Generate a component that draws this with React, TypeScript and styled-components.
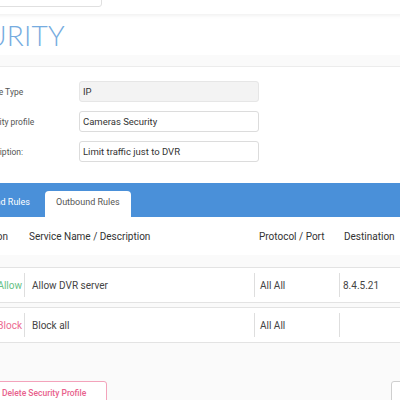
import React from 'react';
import styled, { createGlobalStyle } from 'styled-components';

const GlobalStyle = createGlobalStyle`
  html, body {
    margin: 0;
    padding: 0;
    background: #fafafa;
    overflow: hidden;
    font-family: Roboto, 'Liberation Sans', Arial, sans-serif;
  }
`;

const COLUMNS = '84px 230px 85px 1fr';

const Page = styled.div`
  width: 520px;
  margin-left: -60px;
  display: flex;
  flex-direction: column;
`;

const TopBar = styled.div`
  position: relative;
  z-index: 1;
  height: 14px;
  background: #fff;
  display: flex;
  align-items: flex-end;
  box-shadow: 0 1px 4px rgba(0, 0, 0, 0.08);
  overflow: hidden;
`;

const SearchBox = styled.div`
  width: 150px;
  height: 24px;
  margin: 0 0 7px 12px;
  box-sizing: border-box;
  border: 1px solid #e0e0e0;
  border-radius: 3px;
  font-size: 9px;
  color: #999;
  padding: 2px 6px;
`;

const TitleBar = styled.div`
  height: 41px;
  background: #fff;
  display: flex;
  align-items: center;
  overflow: hidden;
`;

const Title = styled.h1`
  margin: 0 0 0 -4px;
  font-family: Lato, Roboto, 'Liberation Sans', sans-serif;
  font-size: 28px;
  font-weight: 300;
  color: #76ace0;
  letter-spacing: 0.2px;
`;

const Card = styled.div`
  margin-top: 11px;
  background: #fff;
  border-top: 1px solid #ececec;
`;

const Form = styled.div`
  display: flex;
  flex-direction: column;
  gap: 9px;
  padding: 14px 0 21px 38px;
`;

const FieldRow = styled.div`
  display: flex;
  align-items: center;
`;

const Label = styled.label`
  width: 101px;
  font-size: 8.5px;
  color: #555;
`;

const Field = styled.div<{ $readOnly?: boolean }>`
  width: 180px;
  height: 21px;
  box-sizing: border-box;
  border: 1px solid ${({ $readOnly }) => ($readOnly ? '#e6e6e6' : '#dcdcdc')};
  background: ${({ $readOnly }) => ($readOnly ? '#f3f3f3' : '#fff')};
  border-radius: 3px;
  display: flex;
  align-items: center;
  padding-left: 3px;
  font-size: 9.5px;
  color: #333;
`;

const TabBar = styled.div`
  height: 34px;
  box-sizing: border-box;
  background: #4a90d9;
  display: flex;
  align-items: flex-end;
  gap: 4px;
  padding-left: 22px;
`;

const Tab = styled.div<{ $active?: boolean }>`
  height: 26px;
  box-sizing: border-box;
  padding: 6px 11px 0;
  font-size: 9px;
  border-radius: 4px 4px 0 0;
  color: ${({ $active }) => ($active ? '#555' : '#fff')};
  background: ${({ $active }) => ($active ? '#fff' : 'transparent')};
  line-height: 10px;
`;

const HeaderRow = styled.div`
  display: grid;
  grid-template-columns: ${COLUMNS};
  height: 38px;
  align-items: center;
  font-size: 10px;
  font-weight: 400;
  color: #333;
`;

const HeadCell = styled.div<{ $right?: boolean }>`
  padding: ${({ $right }) => ($right ? '0 16px 0 0' : '0 0 0 5px')};
  text-align: ${({ $right }) => ($right ? 'right' : 'left')};
`;

const RuleList = styled.div`
  display: flex;
  flex-direction: column;
  gap: 4px;
  padding-top: 12px;
`;

const RuleRow = styled.div`
  display: grid;
  grid-template-columns: ${COLUMNS};
  height: 36px;
  box-sizing: border-box;
  padding: 5px 0;
  background: #fff;
  border-top: 1px solid #e3e3e3;
  border-bottom: 1px solid #e3e3e3;
  font-size: 10px;
  color: #444;
`;

const ActionCell = styled.div<{ $allow: boolean }>`
  display: flex;
  align-items: center;
  justify-content: flex-end;
  padding-right: 2px;
  color: ${({ $allow }) => ($allow ? '#66c184' : '#ec6a91')};
`;

const Cell = styled.div<{ $pad?: number }>`
  display: flex;
  align-items: center;
  border-left: 1px solid #dedede;
  padding-left: ${({ $pad }) => $pad ?? 7}px;
`;

const Footer = styled.div`
  display: flex;
  justify-content: space-between;
  padding: 38px 9px 0 41px;
`;

const DangerButton = styled.button`
  height: 24px;
  padding: 0 20px;
  background: #fff;
  border: 1px solid #f3a3bb;
  border-radius: 3px;
  color: #e8628d;
  font-family: Roboto, 'Liberation Sans', Arial, sans-serif;
  font-size: 8.5px;
  font-weight: 500;
`;

const PlainButton = styled.button`
  width: 60px;
  height: 24px;
  background: #fff;
  border: 1px solid #cfcfcf;
  border-radius: 3px;
`;

const rules = [
  { allow: true, action: 'Allow', name: 'Allow DVR server', proto: 'All All', dest: '8.4.5.21' },
  { allow: false, action: 'Block', name: 'Block all', proto: 'All All', dest: '' },
];

export default function App() {
  return (
    <>
      <GlobalStyle />
      <Page>
        <TopBar>
          <SearchBox>Search</SearchBox>
        </TopBar>
        <TitleBar>
          <Title>SECURITY</Title>
        </TitleBar>
        <Card>
          <Form>
            <FieldRow>
              <Label>Device Type</Label>
              <Field $readOnly>IP</Field>
            </FieldRow>
            <FieldRow>
              <Label>Security profile</Label>
              <Field>Cameras Security</Field>
            </FieldRow>
            <FieldRow>
              <Label>Description:</Label>
              <Field>Limit traffic just to DVR</Field>
            </FieldRow>
          </Form>
          <TabBar>
            <Tab>Inbound Rules</Tab>
            <Tab $active>Outbound Rules</Tab>
          </TabBar>
          <HeaderRow>
            <HeadCell $right>Action</HeadCell>
            <HeadCell>Service Name / Description</HeadCell>
            <HeadCell>Protocol / Port</HeadCell>
            <HeadCell>Destination</HeadCell>
          </HeaderRow>
        </Card>
        <RuleList>
          {rules.map((r) => (
            <RuleRow key={r.name}>
              <ActionCell $allow={r.allow}>{r.action}</ActionCell>
              <Cell>{r.name}</Cell>
              <Cell $pad={5}>{r.proto}</Cell>
              <Cell $pad={3}>{r.dest}</Cell>
            </RuleRow>
          ))}
        </RuleList>
        <Footer>
          <DangerButton>Delete Security Profile</DangerButton>
          <PlainButton />
        </Footer>
      </Page>
    </>
  );
}
